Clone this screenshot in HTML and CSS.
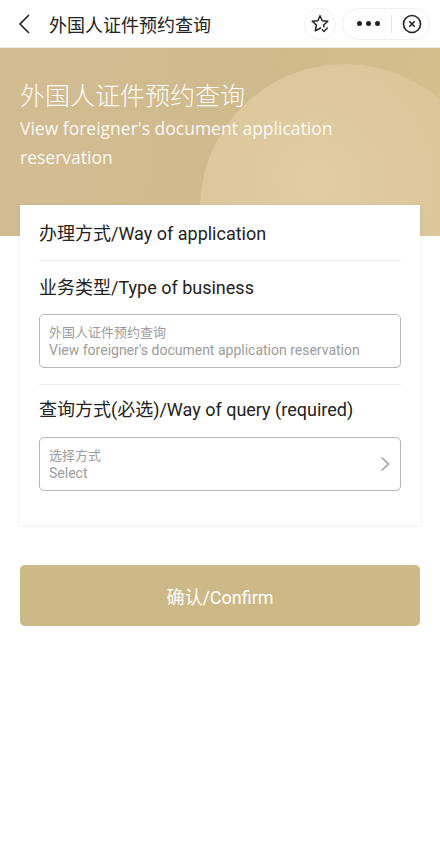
FILE: index.html
```html
<!DOCTYPE html>
<html lang="zh">
<head>
<meta charset="utf-8">
<link rel="stylesheet" href="styles.css">
</head>
<body>
<div class="nav">
  <svg class="back" width="14" height="22" viewBox="0 0 14 22"><path d="M12 2 L3 11 L12 20" fill="none" stroke="#222" stroke-width="1.6"/></svg>
  <div class="nav-title">外国人证件预约查询</div>
  <div class="star-btn">
    <svg width="20" height="20" viewBox="0 0 20 20"><path d="M10.6 14 L5.3 16.8 L6.4 11 L2.2 7.3 L7.9 6.7 L10 1.8 L12.2 6.7 L17.8 7.3 L13.6 11 L14 12.8" fill="none" stroke="#222" stroke-width="1.5" stroke-linejoin="round" stroke-linecap="round"/><path d="M12.3 15.7 L14 17.4 L17.4 14" fill="none" stroke="#222" stroke-width="1.4" stroke-linecap="round" stroke-linejoin="round"/></svg>
  </div>
  <div class="capsule">
    <div class="dots"><span></span><span></span><span></span></div>
    <div class="sep"></div>
    <svg width="20" height="20" viewBox="0 0 20 20"><circle cx="10" cy="10" r="8.5" fill="none" stroke="#222" stroke-width="1.6"/><path d="M7.3 7.3 L12.7 12.7 M12.7 7.3 L7.3 12.7" stroke="#222" stroke-width="1.6"/></svg>
  </div>
</div>
<div class="banner">
  <div class="circle"></div>
  <div class="banner-text">
    <div class="b-title">外国人证件预约查询</div>
    <div class="b-sub">View foreigner's document application reservation</div>
  </div>
</div>
<div class="card">
  <div class="row label">办理方式/Way of application</div>
  <div class="divider"></div>
  <div class="label label2">业务类型/Type of business</div>
  <div class="box">
    <div class="box-text">
      <div>外国人证件预约查询</div>
      <div>View foreigner's document application reservation</div>
    </div>
  </div>
  <div class="divider d2"></div>
  <div class="label label3">查询方式(必选)/Way of query (required)</div>
  <div class="box">
    <div class="box-text">
      <div>选择方式</div>
      <div>Select</div>
    </div>
    <svg class="chev" width="10" height="16" viewBox="0 0 10 16"><path d="M1.5 1.5 L8.5 8 L1.5 14.5" fill="none" stroke="#999" stroke-width="1.4"/></svg>
  </div>
</div>
<div class="btn-wrap">
  <div class="btn">确认/Confirm</div>
</div>
</body>
</html>
```
FILE: styles.css
```css
* { box-sizing: border-box; }
html, body { margin: 0; padding: 0; background: #fff; }
body {
  width: 440px;
  font-family: Roboto, "Noto Sans CJK SC", sans-serif;
  color: #222;
}
.nav {
  height: 48px;
  display: flex;
  align-items: center;
  padding-left: 17px;
  border-bottom: 1px solid #efe9dc;
  background: #fff;
}
.back { margin-right: 18px; }
.nav-title {
  font-family: "Noto Sans CJK SC", sans-serif;
  font-size: 18px;
  color: #222;
  flex: 1;
}
.star-btn {
  width: 32px;
  height: 32px;
  border-radius: 50%;
  border: 1px solid #f1f1f1;
  display: flex;
  align-items: center;
  justify-content: center;
  margin-right: 6px;
}
.capsule {
  width: 88px;
  height: 32px;
  border-radius: 16px;
  border: 1px solid #f1f1f1;
  display: flex;
  align-items: center;
  padding-left: 14px;
  margin-right: 10px;
}
.dots { display: flex; gap: 4px; }
.dots span { width: 5px; height: 5px; border-radius: 50%; background: #222; display: block; }
.sep { width: 1px; height: 18px; background: #e2e2e2; margin: 0 10px 0 11px; }
.banner {
  position: relative;
  overflow: hidden;
  height: 188px;
  background: linear-gradient(100deg, #d2bd93 0%, #cfba8c 60%, #d6bf8d 100%);
}
.circle {
  position: absolute;
  left: 200px;
  top: 16px;
  width: 290px;
  height: 290px;
  border-radius: 50%;
  background: radial-gradient(circle at 40% 40%, #e2cfa6 0%, #dcc79b 60%, #d8c08f 100%);
  opacity: 0.9;
}
.banner-text {
  position: relative;
  padding: 28px 20px 0 20px;
  color: #fff;
}
.b-title {
  font-family: "Noto Sans CJK SC", sans-serif;
  font-weight: 300;
  font-size: 25px;
  line-height: 36px;
  opacity: 0.95;
}
.b-sub {
  font-family: "Open Sans", "Noto Sans", sans-serif;
  font-size: 17.5px;
  line-height: 29px;
  width: 330px;
  margin-top: 2px;
  opacity: 0.9;
}
.card {
  position: relative;
  margin: -31px 20px 0 20px;
  background: #fff;
  padding: 0 19px 34px 19px;
  box-shadow: 0 1px 4px rgba(0,0,0,0.08);
}
.label {
  font-size: 18px;
  color: #222;
  line-height: 24px;
}
.row { padding-top: 17px; padding-bottom: 14px; }
.divider { height: 1px; background: #ececec; }
.label2 { padding-top: 15px; padding-bottom: 14px; }
.label3 { padding-top: 13px; padding-bottom: 15px; }
.d2 { margin-top: 16px; }
.box {
  height: 54px;
  border: 1px solid #b5b5b5;
  border-radius: 5px;
  display: flex;
  align-items: center;
  padding: 0 10px 0 9px;
}
.box-text {
  flex: 1;
  font-size: 14px;
  line-height: 19px;
  color: #9c9c9c;
}
.box-text div:first-child { font-family: "Noto Sans CJK SC", sans-serif; font-size: 13px; }
.btn-wrap { padding: 40px 20px 0 20px; }
.btn {
  height: 61px;
  border-radius: 5px;
  background: #cdb887;
  color: #fff;
  font-size: 18px;
  display: flex;
  align-items: center;
  justify-content: center;
}
```
